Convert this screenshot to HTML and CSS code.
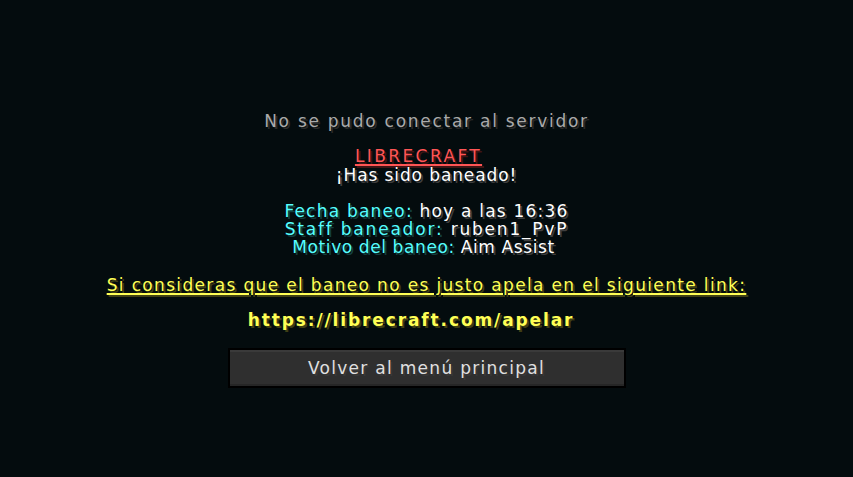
FILE: index.html
```html
<!DOCTYPE html>
<html lang="es">
<head>
<meta charset="utf-8">
<link rel="stylesheet" href="styles.css">
</head>
<body>
<main class="screen">
  <p class="line title">No se pudo conectar al servidor</p>
  <div class="block reason">
    <p class="line red u brand">LIBRECRAFT</p>
    <p class="line white banned">¡Has sido baneado!</p>
  </div>
  <div class="block info">
    <p class="line ls-fecha"><span class="aqua">Fecha baneo: </span><span class="white">hoy a las 16:36</span></p>
    <p class="line ls-staff"><span class="aqua">Staff baneador: </span><span class="white">ruben1_PvP</span></p>
    <p class="line ls-motivo"><span class="aqua">Motivo del baneo: </span><span class="white">Aim Assist</span></p>
  </div>
  <p class="line yellow u appeal">Si consideras que el baneo no es justo apela en el siguiente link:</p>
  <p class="line yellow bold link">https://librecraft.com/apelar</p>
  <button class="btn">Volver al menú principal</button>
</main>
</body>
</html>
```
FILE: styles.css
```css
html, body {
  margin: 0;
  padding: 0;
  background: #040c0e;
  width: 853px;
  height: 477px;
  overflow: hidden;
}
.screen {
  display: flex;
  flex-direction: column;
  align-items: center;
  padding-top: 112px;
  font-family: "DejaVu Sans", sans-serif;
  font-size: 17px;
  letter-spacing: 1.3px;
}
.line {
  margin: 0;
  line-height: 18px;
  height: 18px;
  white-space: nowrap;
  text-align: center;
}
.line span {
  display: inline-block;
  height: 18px;
  line-height: 18px;
  white-space: pre;
}
.title {
  color: #aaaaaa;
  text-shadow: 2px 2px 0 #2a2a2a;
  letter-spacing: 1.73px;
}
.block {
  display: flex;
  flex-direction: column;
  align-items: center;
}
.reason { margin-top: 17px; }
.brand { letter-spacing: 2.4px; padding-right: 16px; }
.banned { margin-top: 1px; letter-spacing: 0.9px; }
.info { margin-top: 18px; }
.ls-fecha { letter-spacing: 1.22px; }
.ls-staff { letter-spacing: 1.8px; }
.ls-motivo { letter-spacing: 0.6px; padding-right: 6px; }
.red { color: #ff5555; text-shadow: 2px 2px 0 #3f1515; }
.white { color: #ffffff; text-shadow: 2px 2px 0 #3f3f3f; }
.aqua { color: #55ffff; text-shadow: 2px 2px 0 #153f3f; }
.yellow { color: #ffff55; text-shadow: 2px 2px 0 #3f3f15; }
.u {
  text-decoration: underline;
  text-decoration-thickness: 2px;
  text-underline-offset: 2px;
}
.bold { font-weight: bold; }
.appeal { margin-top: 20px; letter-spacing: 1.34px; }
.link { margin-top: 17px; letter-spacing: 1.88px; padding-right: 31px; }
.btn {
  margin-top: 19px;
  width: 398px;
  height: 40px;
  background: #2f2f2f;
  border: 2px solid #000;
  box-shadow: inset 0 2px 0 #3a3a3a, inset 0 -2px 0 #262626;
  color: #e0e0e0;
  text-shadow: 2px 2px 0 #383838;
  font-family: "DejaVu Sans", sans-serif;
  font-size: 17px;
  letter-spacing: 1.29px;
  padding: 0;
}
```
